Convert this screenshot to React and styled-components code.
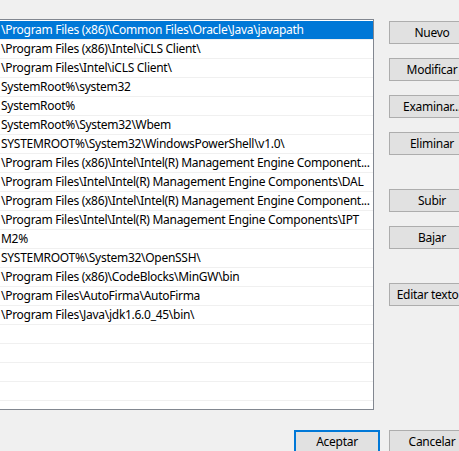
import React from 'react'
import styled, { createGlobalStyle } from 'styled-components'

const paths = [
  '\\Program Files (x86)\\Common Files\\Oracle\\Java\\javapath',
  '\\Program Files (x86)\\Intel\\iCLS Client\\',
  '\\Program Files\\Intel\\iCLS Client\\',
  'SystemRoot%\\system32',
  'SystemRoot%',
  'SystemRoot%\\System32\\Wbem',
  'SYSTEMROOT%\\System32\\WindowsPowerShell\\v1.0\\',
  '\\Program Files (x86)\\Intel\\Intel(R) Management Engine Component...',
  '\\Program Files\\Intel\\Intel(R) Management Engine Components\\DAL',
  '\\Program Files (x86)\\Intel\\Intel(R) Management Engine Component...',
  '\\Program Files\\Intel\\Intel(R) Management Engine Components\\IPT',
  'M2%',
  'SYSTEMROOT%\\System32\\OpenSSH\\',
  '\\Program Files (x86)\\CodeBlocks\\MinGW\\bin',
  '\\Program Files\\AutoFirma\\AutoFirma',
  '\\Program Files\\Java\\jdk1.6.0_45\\bin\\',
]

const ROWS = 20

const buttons = [
  { label: 'Nuevo', top: 2 },
  { label: 'Modificar', top: 14 },
  { label: 'Examinar...', top: 14 },
  { label: 'Eliminar', top: 14 },
  { label: 'Subir', top: 34 },
  { label: 'Bajar', top: 14 },
  { label: 'Editar texto...', top: 34 },
]

const Global = createGlobalStyle`
  html, body {
    margin: 0;
    padding: 0;
    background: #f0f0f0;
    overflow: hidden;
  }
  body {
    font-family: "Noto Sans", "Open Sans", sans-serif;
    font-size: 12px;
    letter-spacing: -0.28px;
    color: #000;
  }
`

const Window = styled.div`
  width: 480px;
  height: 451px;
  display: flex;
  flex-direction: column;
`

const Main = styled.div`
  display: flex;
  gap: 15px;
  padding-top: 19px;
`

const List = styled.div`
  width: 373px;
  height: 388px;
  padding-top: 1px;
  box-sizing: content-box;
  background: #fff;
  border: 1px solid #828790;
  border-left: none;
  overflow: hidden;
`

const Row = styled.div`
  height: 18px;
  line-height: 18px;
  border-bottom: 1px solid #f0f0f0;
  padding-left: 1px;
  white-space: nowrap;
  overflow: hidden;
  background: ${p => (p.$selected ? '#0078d7' : 'transparent')};
  color: ${p => (p.$selected ? '#fff' : '#000')};
`

const Side = styled.div`
  display: flex;
  flex-direction: column;
`

const Button = styled.button`
  width: 86px;
  height: 23px;
  margin-top: ${p => p.$top || 0}px;
  padding: 0;
  box-sizing: border-box;
  background: #e1e1e1;
  border: ${p => (p.$default ? '2px solid #0078d7' : '1px solid #adadad')};
  font-family: "Noto Sans", "Open Sans", sans-serif;
  font-size: 12px;
  letter-spacing: -0.28px;
  color: #000;
  white-space: nowrap;
  overflow: hidden;
`

const Footer = styled.div`
  display: flex;
  gap: 9px;
  padding-left: 294px;
  margin-top: 20px;
`

export default function App() {
  return (
    <Window>
      <Global />
      <Main>
        <List>
          {Array.from({ length: ROWS }, (_, i) => (
            <Row key={i} $selected={i === 0}>{paths[i] || ''}</Row>
          ))}
        </List>
        <Side>
          {buttons.map(b => (
            <Button key={b.label} $top={b.top}>{b.label}</Button>
          ))}
        </Side>
      </Main>
      <Footer>
        <Button $default>Aceptar</Button>
        <Button>Cancelar</Button>
      </Footer>
    </Window>
  )
}
